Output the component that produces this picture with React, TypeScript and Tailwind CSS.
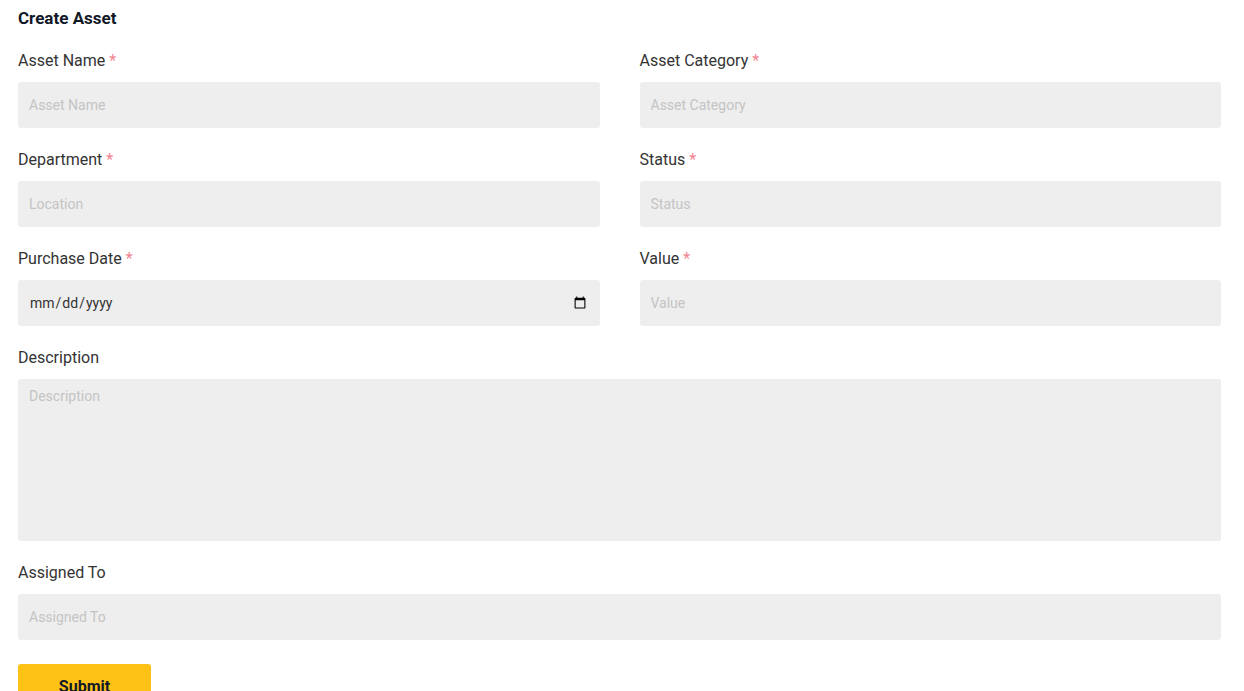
const fieldClass =
  "w-full h-[46px] rounded-[3px] bg-[#eeeeee] px-[11px] text-[14px] text-[#333] placeholder:text-[#c4c4c4] outline-none";

const Label = ({ text, required }: { text: string; required?: boolean }) => (
  <label className="block h-6 text-[16px] leading-[26px] text-[#333]">
    {text}
    {required && <span className="ml-1 text-[#f4838f]">*</span>}
  </label>
);

const Field = ({
  label,
  placeholder,
  required,
  type = "text",
}: {
  label: string;
  placeholder: string;
  required?: boolean;
  type?: string;
}) => (
  <div className="flex flex-col gap-[10px]">
    <Label text={label} required={required} />
    <input type={type} placeholder={placeholder} className={fieldClass} />
  </div>
);

const App = () => {
  return (
    <div className="min-h-screen bg-white pl-[18px] pr-[23px] pt-2 font-['Roboto',sans-serif]">
      <h1 className="text-[17px] font-bold leading-5 text-[#111827]">Create Asset</h1>

      <form className="mt-5 flex flex-col gap-[19px]">
        <div className="grid grid-cols-2 gap-x-10 gap-y-[19px]">
          <Field label="Asset Name" placeholder="Asset Name" required />
          <Field label="Asset Category" placeholder="Asset Category" required />
          <Field label="Department" placeholder="Location" required />
          <Field label="Status" placeholder="Status" required />
          <Field label="Purchase Date" placeholder="" type="date" required />
          <Field label="Value" placeholder="Value" required />
        </div>

        <div className="flex flex-col gap-[10px]">
          <Label text="Description" />
          <textarea
            placeholder="Description"
            className="h-[162px] w-full resize-none rounded-[3px] bg-[#eeeeee] px-[11px] py-[7px] text-[14px] text-[#333] placeholder:text-[#c4c4c4] outline-none"
          />
        </div>

        <Field label="Assigned To" placeholder="Assigned To" />

        <div className="pt-[5px]">
          <button
            type="button"
            className="h-[46px] w-[133px] rounded-[3px] bg-[#fec116] text-[16px] font-bold text-[#111827]"
          >
            Submit
          </button>
        </div>
      </form>
    </div>
  );
};

export default App;
